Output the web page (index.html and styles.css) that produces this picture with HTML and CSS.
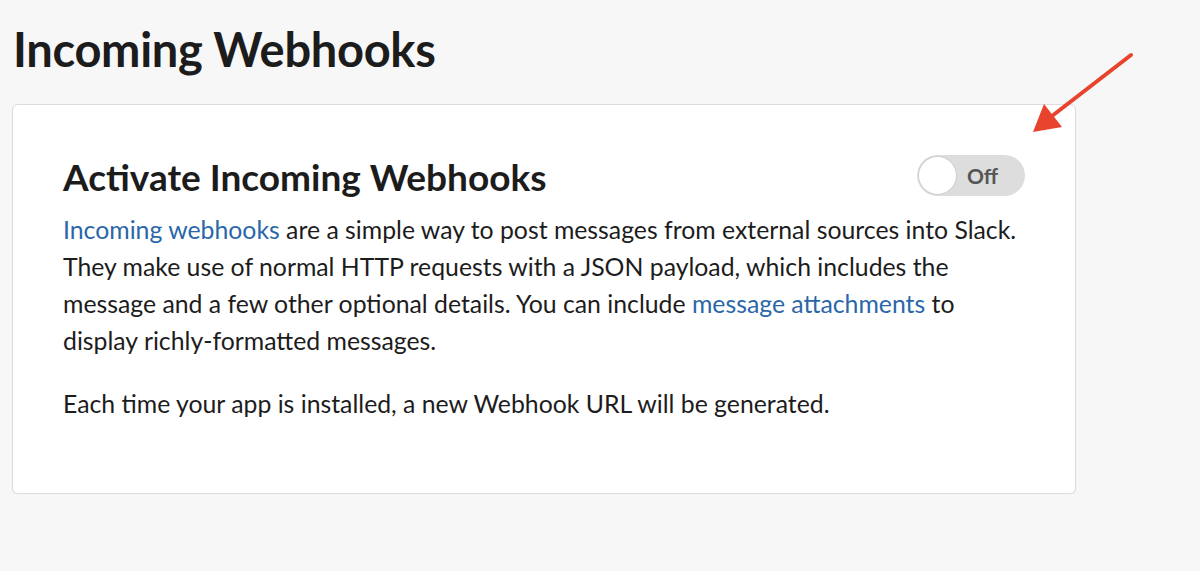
FILE: index.html
```html
<!DOCTYPE html>
<html>
<head>
<meta charset="utf-8">
<link rel="stylesheet" href="styles.css">
</head>
<body>
<div class="page">
  <h1 class="page-title">Incoming Webhooks</h1>
  <div class="card">
    <div class="card-head">
      <h2 class="card-title">Activate Incoming Webhooks</h2>
      <div class="toggle"><span class="knob"></span><span class="toggle-label">Off</span></div>
    </div>
    <p class="text"><a class="link">Incoming webhooks</a> are a simple way to post messages from external sources into Slack. They make use of normal HTTP requests with a JSON payload, which includes the message and a few other optional details. You can include <a class="link">message attachments</a> to display richly-formatted messages.</p>
    <p class="text">Each time your app is installed, a new Webhook URL will be generated.</p>
  </div>
  <svg class="arrow" width="120" height="100" viewBox="0 0 120 100">
    <line x1="109" y1="11" x2="30" y2="72" stroke="#e8432d" stroke-width="4" stroke-linecap="round"/>
    <polygon points="11,88 22,60 40,83" fill="#e8432d"/>
  </svg>
</div>
</body>
</html>
```
FILE: styles.css
```css
html, body {
  margin: 0;
  padding: 0;
  background: #f7f7f7;
}
body {
  font-family: Lato, "Liberation Sans", sans-serif;
  color: #1d1c1d;
}
.page {
  position: relative;
  padding: 20px 0 0 12px;
  width: 1064px;
}
.page-title {
  margin: 0 0 26px 1px;
  font-size: 47px;
  font-weight: 700;
  line-height: 58px;
  letter-spacing: -0.3px;
}
.card {
  background: #fff;
  border: 1px solid #dcdcdc;
  border-radius: 6px;
  box-shadow: 0 1px 2px rgba(0,0,0,0.06);
  padding: 47px 50px 40px 50px;
  height: 301px;
}
.card-head {
  display: flex;
  justify-content: space-between;
  align-items: center;
  margin-bottom: 9px;
}
.card-title {
  margin: 0;
  font-size: 37px;
  font-weight: 700;
  line-height: 50px;
}
.toggle {
  width: 108px;
  height: 41px;
  box-sizing: border-box;
  background: #dddddd;
  border-radius: 21px;
  display: flex;
  align-items: center;
  position: relative;
  margin-top: -4px;
}
.knob {
  width: 37px;
  height: 37px;
  margin-left: 2px;
  border-radius: 50%;
  background: #fff;
  box-shadow: 0 0 0 1px #d0d0d0;
}
.toggle-label {
  margin-left: 11px;
  font-size: 21px;
  font-weight: 700;
  color: #555;
}
.text {
  margin: 0 0 26px 0;
  font-size: 24.8px;
  line-height: 37px;
}
.link {
  color: #2a67a9;
  text-decoration: none;
}
.arrow {
  position: absolute;
  left: 1022px;
  top: 44px;
}
```
